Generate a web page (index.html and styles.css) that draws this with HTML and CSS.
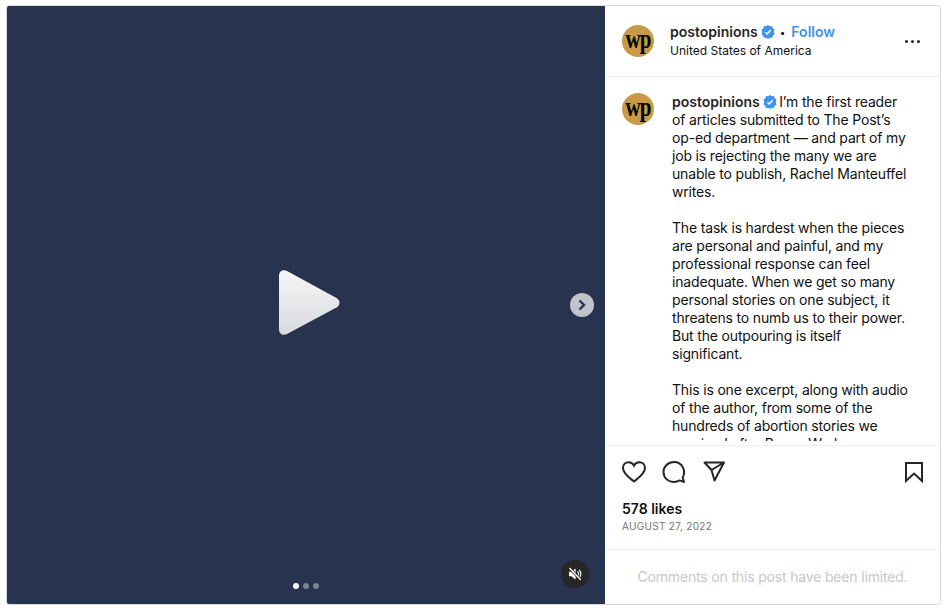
FILE: index.html
```html
<!DOCTYPE html>
<html lang="en">
<head>
  <meta charset="UTF-8">
  <title>postopinions on Instagram</title>
  <link rel="stylesheet" href="styles.css">
</head>
<body>
  <div class="post">
    <div class="media">
      <svg class="play" width="64" height="68" viewBox="0 0 64 68">
        <defs>
          <linearGradient id="playFill" x1="0" y1="0" x2="0" y2="1">
            <stop offset="0" stop-color="#f6f6f7"/>
            <stop offset="1" stop-color="#d9dade"/>
          </linearGradient>
        </defs>
        <path d="M2 7 C2 2 6 0 10 2 L59.500 29 C63.500 31.500 63.500 36 59.500 38.500 L10 65 C6 67 2 65 2 60 Z" fill="url(#playFill)"/>
      </svg>
      <div class="next">
        <svg width="10" height="12" viewBox="0 0 10 12"><path d="M2.500 1.500 L7 6 L2.500 10.500" fill="none" stroke="#27334f" stroke-width="2.400"/></svg>
      </div>
      <div class="dots">
        <span class="dot active"></span>
        <span class="dot"></span>
        <span class="dot"></span>
      </div>
      <div class="mute">
        <svg width="14" height="14" viewBox="0 0 14 14">
          <path d="M1 4.800 H3.400 L7.600 1.400 V12.600 L3.400 9.200 H1 Z" fill="#fff"/>
          <path d="M9.500 4.500 C10.800 5.800 10.800 8.200 9.500 9.500 M11.200 3 C13.300 5.200 13.300 8.800 11.200 11" fill="none" stroke="#fff" stroke-width="1.200"/>
          <path d="M1.500 1 L12.800 13" stroke="#262626" stroke-width="2.600"/>
          <path d="M1.500 1 L12.800 13" stroke="#fff" stroke-width="1.300"/>
        </svg>
      </div>
    </div>

    <div class="side">
      <div class="head">
        <div class="avatar"><span>wp</span></div>
        <div class="head-text">
          <div class="head-line">
            <span class="name">postopinions</span>
            <svg class="badge" width="14" height="14" viewBox="0 0 14 14"><path d="M7 0 L8.800 1.200 L11 1.100 L11.700 3.200 L13.500 4.500 L12.800 7 L13.500 9.500 L11.700 10.800 L11 12.900 L8.800 12.800 L7 14 L5.200 12.800 L3 12.900 L2.300 10.800 L.500 9.500 L1.200 7 L.500 4.500 L2.300 3.200 L3 1.100 L5.200 1.200 Z" fill="#3f93ea"/><path d="M4.300 7.200 L6.200 9 L9.800 5.100" fill="none" stroke="#fff" stroke-width="1.500"/></svg>
            <span class="sep">•</span>
            <span class="follow">Follow</span>
          </div>
          <div class="place">United States of America</div>
        </div>
        <div class="more"><i></i><i></i><i></i></div>
      </div>

      <div class="caption">
        <div class="avatar"><span>wp</span></div>
        <div class="caption-text">
          <p><span class="name">postopinions</span> <svg class="badge inline" width="14" height="14" viewBox="0 0 14 14"><path d="M7 0 L8.800 1.200 L11 1.100 L11.700 3.200 L13.500 4.500 L12.800 7 L13.500 9.500 L11.700 10.800 L11 12.900 L8.800 12.800 L7 14 L5.200 12.800 L3 12.900 L2.300 10.800 L.500 9.500 L1.200 7 L.500 4.500 L2.300 3.200 L3 1.100 L5.200 1.200 Z" fill="#3f93ea"/><path d="M4.300 7.200 L6.200 9 L9.800 5.100" fill="none" stroke="#fff" stroke-width="1.500"/></svg> I’m the first reader of articles submitted to The Post’s op-ed department — and part of my job is rejecting the many we are unable to publish, Rachel Manteuffel writes.</p>
          <p>The task is hardest when the pieces are personal and painful, and my professional response can feel inadequate. When we get so many personal stories on one subject, it threatens to numb us to their power. But the outpouring is itself significant.</p>
          <p>This is one excerpt, along with audio of the author, from some of the hundreds of abortion stories we received after Roe v. Wade was overturned.</p>
        </div>
      </div>

      <div class="actions">
        <div class="icons">
          <svg width="24" height="24" viewBox="0 0 24 24"><path d="M12 21.500 C9 19 1 14 1 8 C1 4.500 3.600 2.200 6.600 2.200 C9 2.200 11 3.500 12 5.600 C13 3.500 15 2.200 17.400 2.200 C20.400 2.200 23 4.500 23 8 C23 14 15 19 12 21.500 Z" fill="none" stroke="#262626" stroke-width="2"/></svg>
          <svg width="24" height="24" viewBox="0 0 24 24"><path d="M20.700 17.400 C24.200 11.300 20.600 2 12 2 C6 2 1.500 6.500 1.500 12 C1.500 17.700 6 22 12 22 C14 22 16 21.400 17.700 20.400 L22 22 Z" fill="none" stroke="#262626" stroke-width="2" stroke-linejoin="round"/></svg>
          <svg width="24" height="24" viewBox="0 0 24 24"><path d="M22 2.500 H2.500 L9.500 10 L12.500 20.500 Z M9.500 10 L22 2.500" fill="none" stroke="#262626" stroke-width="2" stroke-linejoin="round"/></svg>
          <svg class="save" width="24" height="24" viewBox="0 0 24 24"><path d="M20 21 L12 13.500 L4 21 V3 H20 Z" fill="none" stroke="#262626" stroke-width="2"/></svg>
        </div>
        <div class="likes">578 likes</div>
        <div class="date">AUGUST 27, 2022</div>
      </div>

      <div class="limited">Comments on this post have been limited.</div>
    </div>
  </div>
</body>
</html>
```

FILE: styles.css
```css
body {
  margin: 0;
  padding: 5px 0 0 6px;
  background-color: #ffffff;
  color: #111111;
  font-family: Inter, 'Liberation Sans', sans-serif;
  font-size: 14px;
  line-height: 18px;
}

.post {
  display: flex;
  width: 933px;
  height: 598px;
  border: 1px solid #dbdbdb;
  border-radius: 3px;
  overflow: hidden;
}

.media {
  position: relative;
  flex: 0 0 598px;
  background-color: #27334f;
  display: flex;
  align-items: center;
  justify-content: center;
}

.play {
  margin-left: 5px;
  margin-top: -5px;
}

.next {
  position: absolute;
  right: 11px;
  top: 287px;
  width: 24px;
  height: 24px;
  border-radius: 50%;
  background-color: #c0c3cb;
  display: flex;
  align-items: center;
  justify-content: center;
}

.dots {
  position: absolute;
  left: 286px;
  bottom: 15px;
  display: flex;
  gap: 4px;
}

.dot {
  width: 6px;
  height: 6px;
  border-radius: 50%;
  background-color: #7c8496;
}

.dot.active {
  background-color: #ffffff;
}

.mute {
  position: absolute;
  right: 16px;
  bottom: 16px;
  width: 28px;
  height: 28px;
  border-radius: 50%;
  background-color: #262626;
  display: flex;
  align-items: center;
  justify-content: center;
}

.side {
  flex: 1;
  min-width: 0;
  display: flex;
  flex-direction: column;
}

.avatar {
  flex: 0 0 32px;
  width: 32px;
  height: 32px;
  border-radius: 50%;
  background-color: #c99a45;
  color: #000000;
  font-family: 'Liberation Serif', serif;
  font-weight: bold;
  font-size: 21px;
  line-height: 28px;
  letter-spacing: -1px;
  text-align: center;
}

.avatar span {
  display: inline-block;
  transform: scaleY(1.25);
}

.head {
  flex: 0 0 70px;
  display: flex;
  align-items: center;
  padding: 0 20px 0 17px;
  border-bottom: 1px solid #efefef;
}

.head-text {
  flex: 1;
  margin-left: 16px;
}

.head-line {
  display: flex;
  align-items: center;
  height: 18px;
}

.name {
  font-weight: 600;
  letter-spacing: 0;
  color: #262626;
}

.badge {
  margin-left: 3px;
}

.badge.inline {
  margin: 0 -2px 0 0;
  vertical-align: -2px;
}

.sep {
  margin: 0 6px 0 5px;
  font-size: 10px;
}

.follow {
  color: #3f93ea;
  font-weight: 600;
}

.place {
  margin: 1px 0 -1px;
  font-size: 12px;
  line-height: 18px;
}

.more {
  display: flex;
  gap: 3px;
}

.more i {
  width: 3px;
  height: 3px;
  border-radius: 50%;
  background-color: #262626;
}

.caption {
  flex: 1;
  min-height: 0;
  overflow: hidden;
  display: flex;
  margin-bottom: 4px;
  padding: 16px 27px 0 17px;
}

.caption-text {
  margin-left: 18px;
  flex: 1;
  letter-spacing: -.17px;
}

.caption-text p {
  margin: 0 0 18px;
}

.actions {
  flex: 0 0 105px;
  box-sizing: border-box;
  padding: 14px 14px 0 17px;
  border-top: 1px solid #efefef;
  border-bottom: 1px solid #efefef;
}

.icons {
  display: flex;
  gap: 16px;
}

.save {
  margin-left: auto;
}

.likes {
  margin-top: 16px;
  font-weight: 600;
}

.date {
  margin-top: -1px;
  font-size: 10px;
  letter-spacing: .3px;
  color: #737373;
}

.limited {
  flex: 0 0 54px;
  display: flex;
  align-items: center;
  justify-content: center;
  letter-spacing: -.17px;
  color: #c7c7c7;
}
```
